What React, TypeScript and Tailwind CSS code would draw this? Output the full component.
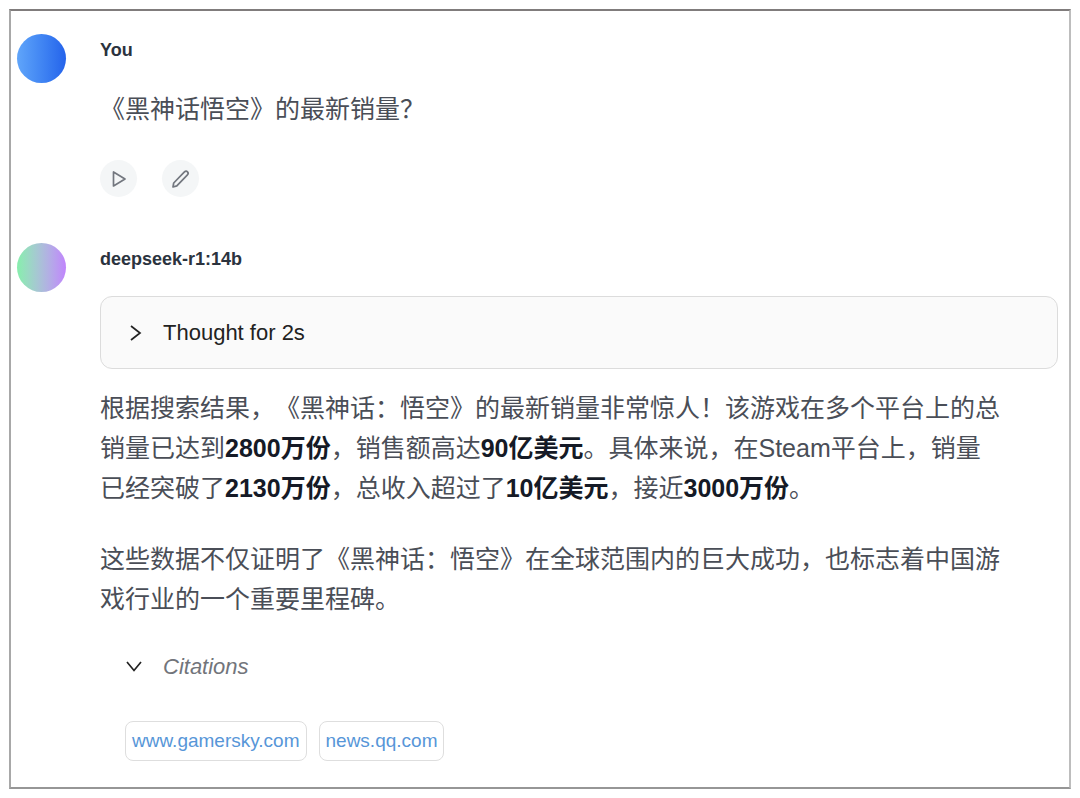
import { useState } from "react";

const CITATIONS = [
  { id: 0, label: "www.gamersky.com", href: "https://www.gamersky.com" },
  { id: 1, label: "news.qq.com", href: "https://news.qq.com" },
];

interface MessageProps {
  name: string;
  avatar: string;
  children: React.ReactNode;
}

interface IconButtonProps {
  label: string;
  children: React.ReactNode;
}

interface ChevronProps {
  open: boolean;
}

const Chevron: React.FC<ChevronProps> = ({ open }) => (
  <svg
    className="w-5 h-5 shrink-0"
    viewBox="0 0 20 20"
    fill="none"
    stroke="currentColor"
    strokeWidth="1.7"
  >
    {open ? <path d="M2 6l7 8.500L16 6" /> : <path d="M6 3l9 7-9 7" />}
  </svg>
);

const IconButton: React.FC<IconButtonProps> = ({ label, children }) => (
  <button
    aria-label={label}
    className="flex items-center justify-center rounded-full w-[37px] h-[37px] bg-[#f4f6f7] text-[#73777f]"
  >
    {children}
  </button>
);

const Message: React.FC<MessageProps> = ({ name, avatar, children }) => (
  <article className="flex">
    <div className={`w-[49px] h-[49px] mr-[34px] shrink-0 rounded-full ${avatar}`} />
    <div className="flex-1 min-w-0 pt-1">
      <h2 className="text-[18px] leading-6 font-bold text-[#2b333e]">{name}</h2>
      {children}
    </div>
  </article>
);

const Thought: React.FC = () => {
  const [open, setOpen] = useState(false);

  return (
    <div className="mt-[25px] rounded-xl border border-[#dcdcdc] bg-[#fafafa]">
      <button
        aria-expanded={open}
        className="flex items-center w-full h-[71px] pl-6 text-[22px] text-[#222222]"
        onClick={() => setOpen(!open)}
      >
        <Chevron open={open} />
        <span className="ml-[18px]">Thought for 2s</span>
      </button>
    </div>
  );
};

const Citations: React.FC = () => {
  const [open, setOpen] = useState(true);

  return (
    <div className="mt-[31px] pl-[25px]">
      <button
        aria-expanded={open}
        className="flex items-center h-8 text-[22px] text-[#222222]"
        onClick={() => setOpen(!open)}
      >
        <Chevron open={open} />
        <span className="ml-[18px] italic text-[#72757b]">Citations</span>
      </button>
      {open && (
        <div className="flex flex-wrap gap-3 mt-[39px]">
          {CITATIONS.map((item) => (
            <a
              key={item.id}
              href={item.href}
              className="flex items-center h-10 px-1.5 rounded-lg border border-[#dedede] text-[19px] text-[#5796d8]"
            >
              {item.label}
            </a>
          ))}
        </div>
      )}
    </div>
  );
};

export default function App() {
  return (
    <div
      lang="zh-CN"
      className="bg-white p-[9px] font-['Liberation_Sans','Noto_Sans_CJK_SC',sans-serif] [text-spacing-trim:space-all]"
    >
      <main className="border-2 border-t-[#807c7c] border-l-[#a8a8a8] border-r-[#bdbdbd] border-b-[#969696] pt-[23px] pb-[26px] pl-1.5 pr-[11px]">
        <Message name="You" avatar="bg-linear-to-r from-[#60a5fa] to-[#2563eb]">
          <p className="mt-[27px] text-[25px] leading-10 text-[#4a4e57]">
            《黑神话悟空》的最新销量？
          </p>
          <div className="flex gap-[25px] mt-[31px]">
            <IconButton label="Play">
              <svg
                className="w-5 h-5"
                viewBox="0 0 20 20"
                fill="none"
                stroke="currentColor"
                strokeWidth="1.7"
                strokeLinejoin="round"
              >
                <path d="M4.500 3v14L16 10Z" />
              </svg>
            </IconButton>
            <IconButton label="Edit">
              <svg
                className="w-5 h-5"
                viewBox="0 0 20 20"
                fill="none"
                stroke="currentColor"
                strokeWidth="1.7"
                strokeLinejoin="round"
              >
                <path d="M2 18l.7-4L13.200 3.200c1.100-1.100 2.500-1.200 3.300-.4s.8 2.200-.3 3.300L5.800 16.900Z" />
              </svg>
            </IconButton>
          </div>
        </Message>

        <div className="mt-[46px]">
          <Message
            name="deepseek-r1:14b"
            avatar="bg-linear-to-r from-[#86efac] to-[#c084fc]"
          >
            <Thought />
            <div className="mt-[19px] max-w-[65ch] space-y-[31px] text-[25px] leading-10 text-[#4a4e57] [&_strong]:font-bold [&_strong]:text-[#151a26]">
              <p>
                根据搜索结果，《黑神话：悟空》的最新销量非常惊人！该游戏在多个平台上的总销量已达到
                <strong>2800万份</strong>，销售额高达<strong>90亿美元</strong>
                。具体来说，在Steam平台上，销量已经突破了
                <strong>2130万份</strong>，总收入超过了
                <strong>10亿美元</strong>，接近<strong>3000万份</strong>。
              </p>
              <p>
                这些数据不仅证明了《黑神话：悟空》在全球范围内的巨大成功，也标志着中国游戏行业的一个重要里程碑。
              </p>
            </div>
            <Citations />
          </Message>
        </div>
      </main>
    </div>
  );
}
